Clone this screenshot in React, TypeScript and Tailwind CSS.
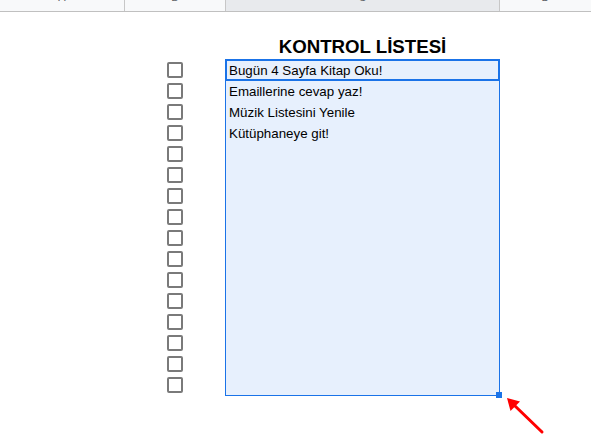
const items = [
  "Bugün 4 Sayfa Kitap Oku!",
  "Emaillerine cevap yaz!",
  "Müzik Listesini Yenile",
  "Kütüphaneye git!",
];

const rows = Array.from({ length: 16 }, (_, i) => i);

function HeaderCell({ label, className }: { label: string; className: string }) {
  return (
    <div className={`flex h-full justify-center overflow-hidden border-r border-[#c7c7c7] ${className}`}>
      <span className="-mt-[8px] text-[11px] leading-[11px] text-[#5f6368]">{label}</span>
    </div>
  );
}

export default function App() {
  return (
    <div className="relative h-[446px] w-[591px] overflow-hidden bg-white font-['Liberation_Sans',Arial,sans-serif]">
      {/* column header strip */}
      <div className="flex h-[12px] border-b border-[#c0c0c0] bg-[#f8f9fa]">
        <HeaderCell label="A" className="w-[125px]" />
        <HeaderCell label="B" className="w-[101px]" />
        <HeaderCell label="C" className="w-[274px] bg-[#e8eaed]" />
        <HeaderCell label="D" className="flex-1 border-r-0" />
      </div>

      <div className="flex pt-[26px]">
        <div className="w-[167px]" />
        <div className="flex w-[58px] flex-col pt-[21px]">
          {rows.map((i) => (
            <div key={i} className="flex h-[21px] items-center">
              <div className="h-[16px] w-[16px] rounded-[2px] border-2 border-[#7a7a7a]" />
            </div>
          ))}
        </div>
        <div className="flex w-[275px] flex-col">
          <div className="h-[21px] text-center text-[18.67px] font-bold leading-[17px] text-black">
            KONTROL LİSTESİ
          </div>
          <div className="relative h-[337px] border border-[#1a73e8] bg-[#e7f0fd]">
            {items.map((t) => (
              <div key={t} className="h-[21px] pl-[3px] text-[13.33px] leading-[21px] text-black">
                {t}
              </div>
            ))}
            <div className="absolute -left-px -top-px h-[22px] w-[275px] border-2 border-[#1a73e8]" />
            <div className="absolute -bottom-[3px] -right-[3px] h-[6px] w-[6px] bg-[#1a73e8]" />
          </div>
        </div>
      </div>

      {/* annotation arrow */}
      <svg className="absolute left-0 top-0" width="591" height="446" viewBox="0 0 591 446">
        <line x1="514" y1="405" x2="542" y2="432" stroke="#ff0000" strokeWidth="3" strokeLinecap="round" />
        <polygon points="507,398 520,401.5 510.5,411" fill="#ff0000" />
      </svg>
    </div>
  );
}
